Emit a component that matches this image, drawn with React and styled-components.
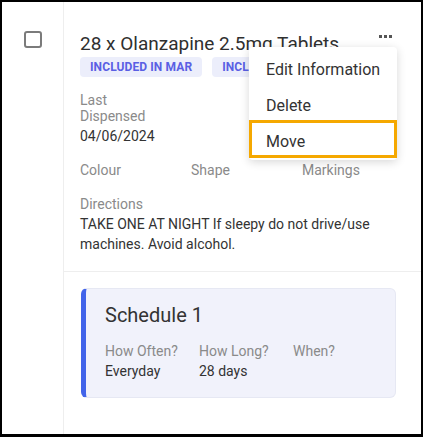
import React from "react";
import styled, { createGlobalStyle } from "styled-components";

const Global = createGlobalStyle`
  html, body { margin: 0; padding: 0; background: #000; }
  body { font-family: Roboto, "Liberation Sans", sans-serif; }
  * { box-sizing: border-box; }
`;

const Frame = styled.div`
  position: relative;
  width: 423px;
  height: 437px;
  border-style: solid;
  border-color: #000;
  border-width: 2px 2px 3px 2px;
  background: #fff;
  display: flex;
  overflow: hidden;
`;

const SelectCol = styled.div`
  width: 61px;
  flex: none;
  padding: 29px 0 0 22px;
`;

const Checkbox = styled.div`
  width: 18px;
  height: 17px;
  border: 2px solid #7b7b7b;
  border-radius: 3px;
  background: #fff;
`;

const MainCol = styled.div`
  flex: 1;
  min-width: 0;
  border-left: 1px solid #eeeeee;
  display: flex;
  flex-direction: column;
`;

const Details = styled.section`
  padding: 30px 25px 17px 16px;
  border-bottom: 1px solid #eeeeee;
`;

const TitleRow = styled.div`
  display: flex;
  justify-content: space-between;
  align-items: flex-start;
`;

const Title = styled.h2`
  margin: 0;
  font-size: 19px;
  line-height: 24px;
  font-weight: 400;
  color: #2f2f2f;
  white-space: nowrap;
`;

const Dots = styled.div`
  display: flex;
  gap: 2px;
  margin: 3px 4px 0 0;
  span {
    width: 3px;
    height: 3px;
    background: #555;
    display: block;
  }
`;

const Badges = styled.div`
  display: flex;
  gap: 10px;
  margin-top: 1px;
`;

const Badge = styled.span`
  height: 20px;
  line-height: 20px;
  padding: 0 10px;
  border-radius: 4px;
  background: #eceefb;
  color: #5a5fe4;
  font-size: 12px;
  font-weight: 700;
  letter-spacing: 0.1px;
  white-space: nowrap;
`;

const Fields = styled.div`
  display: flex;
  flex-direction: column;
  gap: 16px;
  margin-top: 15px;
`;

const FieldGrid = styled.div`
  display: grid;
  grid-template-columns: 111px 111px auto;
`;

const Field = styled.div`
  width: ${(p) => (p.$narrow ? "80px" : "auto")};
`;

const Label = styled.div`
  font-size: 14px;
  line-height: 16px;
  color: #8a8a8a;
`;

const Value = styled.div`
  margin-top: 2px;
  font-size: 14px;
  line-height: 20px;
  color: #333;
`;

const Schedules = styled.section`
  padding: 16px 25px 0 17px;
`;

const ScheduleCard = styled.div`
  background: #f1f2fb;
  border: 1px solid #e6e8f3;
  border-left: 5px solid #4264ea;
  border-radius: 6px;
  padding: 14px 16px 16px 19px;
`;

const ScheduleTitle = styled.h3`
  margin: 0;
  font-size: 20px;
  line-height: 24px;
  font-weight: 400;
  color: #333;
`;

const ScheduleGrid = styled.div`
  display: grid;
  grid-template-columns: 94px 94px auto;
  margin-top: 16px;
`;

const Menu = styled.div`
  position: absolute;
  left: 247px;
  top: 45px;
  width: 148px;
  background: #fff;
  border-radius: 4px;
  box-shadow: 0 2px 10px rgba(0, 0, 0, 0.16);
  padding: 4px 0 2px;
`;

const MenuItem = styled.div`
  height: 36px;
  display: flex;
  align-items: center;
  padding-left: 17px;
  font-size: 16px;
  color: #333;
  ${(p) =>
    p.$highlight &&
    `
    margin-top: -3px;
    height: 38px;
    border: 3px solid #f5a800;
    padding-left: 14px;
    padding-top: 4px;
  `}
`;

export default function App() {
  return (
    <>
      <Global />
      <Frame>
        <SelectCol>
          <Checkbox />
        </SelectCol>
        <MainCol>
          <Details>
            <TitleRow>
              <Title>28 x Olanzapine 2.5mg Tablets</Title>
              <Dots>
                <span />
                <span />
                <span />
              </Dots>
            </TitleRow>
            <Badges>
              <Badge>INCLUDED IN MAR</Badge>
              <Badge>INCLUDED IN MDS</Badge>
            </Badges>
            <Fields>
              <Field $narrow>
                <Label>Last Dispensed</Label>
                <Value>04/06/2024</Value>
              </Field>
              <FieldGrid>
                <Field>
                  <Label>Colour</Label>
                  <Value />
                </Field>
                <Field>
                  <Label>Shape</Label>
                  <Value />
                </Field>
                <Field>
                  <Label>Markings</Label>
                  <Value />
                </Field>
              </FieldGrid>
              <Field>
                <Label>Directions</Label>
                <Value>
                  TAKE ONE AT NIGHT If sleepy do not drive/use machines. Avoid alcohol.
                </Value>
              </Field>
            </Fields>
          </Details>
          <Schedules>
            <ScheduleCard>
              <ScheduleTitle>Schedule 1</ScheduleTitle>
              <ScheduleGrid>
                <Field>
                  <Label>How Often?</Label>
                  <Value>Everyday</Value>
                </Field>
                <Field>
                  <Label>How Long?</Label>
                  <Value>28 days</Value>
                </Field>
                <Field>
                  <Label>When?</Label>
                  <Value />
                </Field>
              </ScheduleGrid>
            </ScheduleCard>
          </Schedules>
        </MainCol>
        <Menu>
          <MenuItem>Edit Information</MenuItem>
          <MenuItem>Delete</MenuItem>
          <MenuItem $highlight>Move</MenuItem>
        </Menu>
      </Frame>
    </>
  );
}
